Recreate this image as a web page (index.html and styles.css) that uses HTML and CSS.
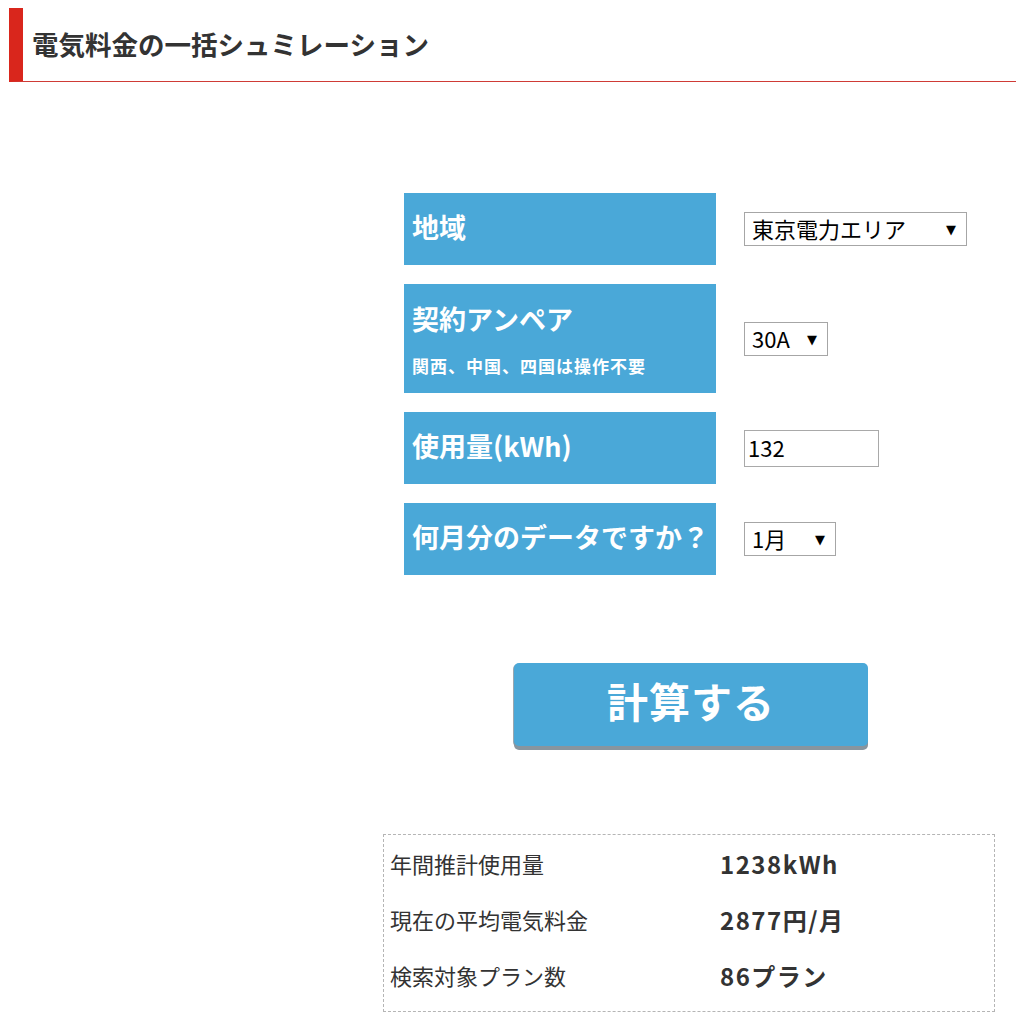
FILE: index.html
```html
<!DOCTYPE html>
<html lang="ja">
<head>
    <meta charset="UTF-8">
    <meta name="viewport" content="width=device-width, initial-scale=1.0">
    <title>電気料金の一括シュミレーション</title>
    <link rel="stylesheet" href="styles.css">
</head>

<body>
    <h2 class="page-title">電気料金の一括シュミレーション</h2>

    <div class="content">
        <form class="sim-form">
            <div class="label-cell">地域</div>
            <div class="control-cell">
                <span class="select-wrap">
                    <select class="select select-area">
                        <option>東京電力エリア</option>
                    </select>
                </span>
            </div>

            <div class="label-cell label-cell-tall">
                <span>契約アンペア</span>
                <span class="note">関西、中国、四国は操作不要</span>
            </div>
            <div class="control-cell">
                <span class="select-wrap">
                    <select class="select select-amp">
                        <option>30A</option>
                    </select>
                </span>
            </div>

            <div class="label-cell">使用量(kWh)</div>
            <div class="control-cell">
                <input type="text" class="usage-input" value="132">
            </div>

            <div class="label-cell">何月分のデータですか？</div>
            <div class="control-cell">
                <span class="select-wrap">
                    <select class="select select-month">
                        <option>1月</option>
                    </select>
                </span>
            </div>
        </form>

        <button type="button" class="calc-btn">計算する</button>

        <div class="result-box">
            <div class="result-row">
                <span class="result-label">年間推計使用量</span>
                <span class="result-value">1238kWh</span>
            </div>
            <div class="result-row">
                <span class="result-label">現在の平均電気料金</span>
                <span class="result-value">2877円/月</span>
            </div>
            <div class="result-row">
                <span class="result-label">検索対象プラン数</span>
                <span class="result-value">86プラン</span>
            </div>
        </div>
    </div>
</body>
</html>
```

FILE: styles.css
```css
* {
    margin: 0;
    padding: 0;
    box-sizing: border-box;
}
body {
    font-family: "Noto Sans CJK JP", "Noto Sans", sans-serif;
    background: #fff;
    color: #333;
}
.page-title {
    display: flex;
    align-items: center;
    height: 74px;
    margin: 8px 0 0 9px;
    padding: 0 0 2px 9px;
    border-left: 14px solid #d9261c;
    border-bottom: 1px solid #cf3b36;
    font-size: 26.5px;
    font-weight: 700;
    color: #333;
}
.content {
    width: 612px;
    margin: 111px 0 0 383px;
}
.sim-form {
    display: grid;
    grid-template-columns: 312px auto;
    column-gap: 28px;
    row-gap: 19px;
    align-items: center;
    padding-left: 21px;
}
.label-cell {
    display: flex;
    flex-direction: column;
    justify-content: center;
    min-height: 72px;
    padding: 0 0 4px 8px;
    background: #4aa8d8;
    color: #fff;
    font-size: 27px;
    font-weight: 700;
    line-height: 38px;
    white-space: nowrap;
}
.label-cell-tall {
    min-height: 109px;
    padding-bottom: 0;
}
.label-cell .note {
    margin-top: 16px;
    font-size: 17px;
    line-height: 24px;
    letter-spacing: 1px;
}
.control-cell {
    display: flex;
    align-items: center;
}
.select-wrap {
    position: relative;
    display: inline-block;
}
.select-wrap::after {
    content: "\25BC";
    position: absolute;
    right: 11px;
    top: 50%;
    transform: translateY(-50%);
    font-family: "DejaVu Sans", sans-serif;
    font-size: 13px;
    color: #000;
    pointer-events: none;
}
.select {
    appearance: none;
    -webkit-appearance: none;
    height: 34px;
    padding: 0 0 2px 7px;
    border: 1px solid #a6a6a6;
    border-radius: 0;
    background: #fff;
    color: #000;
    font-family: "Noto Sans CJK JP", sans-serif;
    font-size: 22px;
    line-height: 30px;
}
.select-area {
    width: 223px;
}
.select-amp {
    width: 84px;
}
.select-month {
    width: 92px;
}
.usage-input {
    width: 135px;
    height: 37px;
    padding: 0 0 2px 3px;
    border: 1px solid #a9a9a9;
    color: #000;
    font-family: "Noto Sans CJK JP", sans-serif;
    font-size: 22px;
}
.calc-btn {
    display: block;
    width: 354px;
    height: 83px;
    margin: 88px 0 0 131px;
    padding-bottom: 10px;
    border: none;
    border-radius: 5px;
    background: #4aa8d8;
    box-shadow: 0 4px 0 #87959f, -1px 1px 0 #9aa7b0;
    color: #fff;
    font-family: "Noto Sans CJK JP", sans-serif;
    font-size: 41px;
    font-weight: 700;
    letter-spacing: 1px;
    cursor: pointer;
}
.result-box {
    margin-top: 88px;
    padding: 0 0 8px 6px;
    border: 1px dashed #b5b5b5;
}
.result-row {
    display: flex;
    align-items: center;
    height: 56px;
    font-size: 22px;
}
.result-label {
    width: 330px;
    color: #333;
}
.result-value {
    font-size: 24px;
    font-weight: 700;
    letter-spacing: 1.5px;
    color: #333;
}
```
